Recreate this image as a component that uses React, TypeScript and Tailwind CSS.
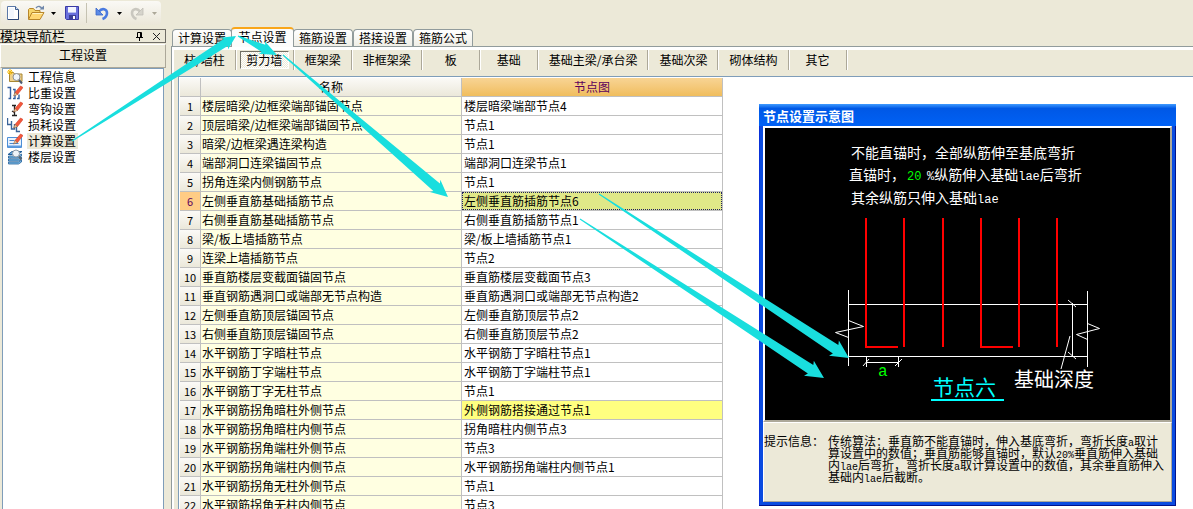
import React from "react";

const toolbarButton = "flex h-5 items-center justify-center";

function NewIcon() {
  return (
    <svg width="14" height="16" viewBox="0 0 14 16" aria-hidden="true">
      <path d="M1.5 1.5h8l3 3v10h-11z" fill="#fff" stroke="#5a78a8" />
      <path d="M3 3h5v10H3z" fill="#f2f6fd" />
      <path d="M9.5 1.5v3h3" fill="#cfdcf2" stroke="#3f5f8f" />
      <path d="M2 14.5h10.500V5" fill="none" stroke="#2c4777" />
    </svg>
  );
}

function OpenIcon() {
  return (
    <svg width="18" height="16" viewBox="0 0 18 16" aria-hidden="true">
      <path d="M1.5 14V4.5l1-1h4l1.5 2h5V8" fill="#f6d56b" stroke="#b8862a" />
      <path d="M1.500 14.500l3.500-7h12l-4 7z" fill="#ffd772" stroke="#b8862a" />
      <path d="M5.500 8.500h10" stroke="#fff3bf" />
      <path d="M9 3c2-2.500 5-2 6 1" fill="none" stroke="#6f87ab" strokeWidth="1.400" />
      <path d="M12.500 4.500h4.500V0.500z" fill="#6f87ab" />
    </svg>
  );
}

function SaveIcon() {
  return (
    <svg width="16" height="16" viewBox="0 0 16 16" aria-hidden="true">
      <path d="M1.500 1.500h13v13h-12l-1-1z" fill="#6a70dc" stroke="#3a3aa4" />
      <path d="M4 2h8v6H4z" fill="#f3f5ff" />
      <path d="M4 7h8v1H4z" fill="#b7c0f0" />
      <path d="M5 10h7v4H5z" fill="#3c3f96" />
      <path d="M9 11h2v3H9z" fill="#fff" />
    </svg>
  );
}

function UndoIcon({ off = false }: { off?: boolean }) {
  return (
    <svg width="14" height="15" viewBox="0 0 14 15" aria-hidden="true" className={off ? "-scale-x-100" : ""}>
      <path d="M4 5.500c3-4 8-2.500 8 1.500 0 3-2 5-4.500 6" fill="none" stroke={off ? "#c9c7bf" : "#4a7ae0"} strokeWidth="2.600" />
      <path d="M1 2v7h7z" fill={off ? "#d6d4cc" : "#5b8be6"} stroke={off ? "#c0beb6" : "#3a66c8"} strokeWidth=".8" />
    </svg>
  );
}

function Caret({ off = false }: { off?: boolean }) {
  return (
    <svg width="5" height="3" viewBox="0 0 5 3" aria-hidden="true">
      <path d="M0 0h5L2.500 3z" fill={off ? "#aca899" : "#000"} />
    </svg>
  );
}

const pencil = (
  <g>
    <path d="M8 7.500L13.500 1l2.500 1.500L10.500 9.500z" fill="#f4583c" stroke="#d03a26" strokeWidth=".6" />
    <path d="M8 7.500L6.500 11l4-1.500z" fill="#f3cf9c" stroke="#8a4b2a" strokeWidth=".5" />
  </g>
);

const navIcons: Record<string, React.ReactNode> = {
  info: (
    <>
      <path d="M2.500 12.500v-9h4l1 1.500h7.500v7.500z" fill="#efd08a" stroke="#a88734" />
      <path d="M0 3h6M3 0v6M1 1l4 4M5 1L1 5" stroke="#f2b90c" />
      <circle cx="9.500" cy="8" r="3.500" fill="#f0f5fb" stroke="#8a8f98" />
      <path d="M12 11l3 3.500" stroke="#4d5c74" strokeWidth="2" />
    </>
  ),
  weight: (
    <>
      <path d="M0.500 2.500h3v11h-2M6 4.500h2v9H6M10 13.500h2v-4" fill="none" stroke="#355f9f" strokeWidth="1.400" />
      {pencil}
    </>
  ),
  hook: (
    <>
      <path d="M5 4.500h4M7.500 5v9M5 14.500h5M5 10l2.500 1.500" fill="none" stroke="#222" strokeWidth="1.300" />
      {pencil}
    </>
  ),
  loss: (
    <>
      <path d="M.500 1v6.500h3.500M4.500 4v8h3V7M9.500 10v4.500h3.500" fill="none" stroke="#3a6398" strokeWidth="1.400" />
      {pencil}
    </>
  ),
  calc: (
    <>
      <path d="M.5 4.500h14v10H.5z" fill="#e9f2fd" stroke="#4d8fd6" />
      <path d="M1 12.500h13v2H1z" fill="#5c9be0" />
      <path d="M2.500 7.500h5M2.500 10.500h9" stroke="#4688cf" />
      {pencil}
    </>
  ),
  floor: (
    <>
      <path d="M1 5.500l4-3h10l-4 3zM1 9l3-2M1 12l3-2" fill="#6aa9dd" stroke="#245f98" />
      <path d="M1.500 7h10l3-2v2l-3 2h-10zM1.500 10h10l3-2v2l-3 2h-10zM1.500 13h10l3-2v2l-3 2h-10z" fill="#7dbce8" stroke="#245f98" strokeWidth=".8" />
      <circle cx="9" cy="4.500" r="3.500" fill="#eef3f8" stroke="#8c98a4" />
      <path d="M12 7.500l2.500 3" stroke="#5b6875" strokeWidth="2" />
    </>
  ),
};

const navItems = [
  { id: "info", label: "工程信息" },
  { id: "weight", label: "比重设置" },
  { id: "hook", label: "弯钩设置" },
  { id: "loss", label: "损耗设置" },
  { id: "calc", label: "计算设置" },
  { id: "floor", label: "楼层设置" },
];

const tabs = ["计算设置", "节点设置", "箍筋设置", "搭接设置", "箍筋公式"];

const kinds = ["柱/墙柱", "剪力墙", "框架梁", "非框架梁", "板", "基础", "基础主梁/承台梁", "基础次梁", "砌体结构", "其它"];

const rows: [string, string][] = [
  ["楼层暗梁/边框梁端部锚固节点", "楼层暗梁端部节点4"],
  ["顶层暗梁/边框梁端部锚固节点", "节点1"],
  ["暗梁/边框梁遇连梁构造", "节点1"],
  ["端部洞口连梁锚固节点", "端部洞口连梁节点1"],
  ["拐角连梁内侧钢筋节点", "节点1"],
  ["左侧垂直筋基础插筋节点", "左侧垂直筋插筋节点6"],
  ["右侧垂直筋基础插筋节点", "右侧垂直筋插筋节点1"],
  ["梁/板上墙插筋节点", "梁/板上墙插筋节点1"],
  ["连梁上墙插筋节点", "节点2"],
  ["垂直筋楼层变截面锚固节点", "垂直筋楼层变截面节点3"],
  ["垂直钢筋遇洞口或端部无节点构造", "垂直筋遇洞口或端部无节点构造2"],
  ["左侧垂直筋顶层锚固节点", "左侧垂直筋顶层节点2"],
  ["右侧垂直筋顶层锚固节点", "右侧垂直筋顶层节点2"],
  ["水平钢筋丁字暗柱节点", "水平钢筋丁字暗柱节点1"],
  ["水平钢筋丁字端柱节点", "水平钢筋丁字端柱节点1"],
  ["水平钢筋丁字无柱节点", "节点1"],
  ["水平钢筋拐角暗柱外侧节点", "外侧钢筋搭接通过节点1"],
  ["水平钢筋拐角暗柱内侧节点", "拐角暗柱内侧节点3"],
  ["水平钢筋拐角端柱外侧节点", "节点3"],
  ["水平钢筋拐角端柱内侧节点", "水平钢筋拐角端柱内侧节点1"],
  ["水平钢筋拐角无柱外侧节点", "节点1"],
  ["水平钢筋拐角无柱内侧节点", "节点3"],
];

function Toolbar() {
  return (
    <div className="flex h-7 shrink-0 items-start pt-px pl-px">
      <div className="flex h-6 w-40 items-center rounded bg-linear-to-b from-[#faf9f5] to-[#ebe7d9] pl-1">
        <button type="button" aria-label="新建" className={`${toolbarButton} w-4`}><NewIcon /></button>
        <button type="button" aria-label="打开" className={`${toolbarButton} ml-1.5 gap-1.5`}><OpenIcon /><Caret /></button>
        <button type="button" aria-label="保存" className={`${toolbarButton} ml-2 w-4`}><SaveIcon /></button>
        <span className="mr-2 ml-1.5 h-5 w-px bg-[#c5c2b2]" />
        <button type="button" aria-label="撤销" className={`${toolbarButton} gap-2`}><UndoIcon /><Caret /></button>
        <button type="button" aria-label="恢复" disabled className={`${toolbarButton} ml-2 gap-2`}><UndoIcon off /><Caret off /></button>
      </div>
    </div>
  );
}

function Navigator() {
  return (
    <aside className="mt-px flex w-[166px] shrink-0 flex-col">
      <div className="flex h-[14px] items-center border border-l-0 border-[#6f6d66] pr-1">
        <h2 className="flex-1 text-[13px] leading-3">模块导航栏</h2>
        <button type="button" aria-label="固定" className="mr-2">
          <svg width="9" height="10" viewBox="0 0 9 10"><path d="M2.500 6V1.500h4V6M5.500 1v5M1 6.500h7M4.500 7v3" fill="none" stroke="#000" /></svg>
        </button>
        <button type="button" aria-label="关闭">
          <svg width="9" height="9" viewBox="0 0 9 9"><path d="M1 1l7 7M8 1L1 8" stroke="#222" /></svg>
        </button>
      </div>
      <button type="button" className="mt-px h-6 border border-[#aca899] border-t-white border-l-white pb-0.5 leading-3">工程设置</button>
      <nav className="mr-0.5 ml-0.5 flex-1 border border-b-0 border-[#7f9db9] bg-white">
        <ul>
          {navItems.map((item) => (
            <li key={item.id}>
              <button type="button" className="flex h-4 items-center gap-1 pl-1">
                <svg width="16" height="16" viewBox="0 0 16 16" aria-hidden="true">{navIcons[item.id]}</svg>
                <span className={item.id === "calc" ? "bg-[#ece9d8] pr-0.5 pl-px leading-4" : "pr-0.5 pl-px leading-4"}>{item.label}</span>
              </button>
            </li>
          ))}
        </ul>
      </nav>
    </aside>
  );
}

function Tabs() {
  return (
    <div role="tablist" className="flex h-[18px] items-end pl-px">
      {tabs.map((tab) =>
        tab === "节点设置" ? (
          <button key={tab} type="button" role="tab" aria-selected className="relative z-10 -mx-px -mb-px h-5 w-[63px] rounded-t-sm border border-t-2 border-b-0 border-[#919b9c] border-t-[#f9a61a] bg-[#fcfcfb] pb-0.5 leading-4">
            {tab}
          </button>
        ) : (
          <button key={tab} type="button" role="tab" aria-selected={false} className="h-[17px] w-[60px] rounded-t-sm border border-b-0 border-[#919b9c] bg-linear-to-b from-white to-[#efeee6] leading-4">
            {tab}
          </button>
        )
      )}
    </div>
  );
}

function Kinds() {
  return (
    <div className="-ml-px flex h-5 shrink-0 pr-px">
      {kinds.map((kind) => (
        <div key={kind} className="flex min-w-[58px] justify-center border-r border-[#aca899] shadow-[1px_0_0_#fff]">
          {kind === "剪力墙" ? (
            <button type="button" aria-pressed className="mx-1 my-px flex-1 border border-[#716f64] border-r-white border-b-white bg-[conic-gradient(#fff_25%,#ece9d8_0_50%,#fff_0_75%,#ece9d8_0)] bg-size-[2px_2px] px-1 leading-4">
              {kind}
            </button>
          ) : (
            <button type="button" className="pr-2.5 pl-[11px] leading-5">{kind}</button>
          )}
        </div>
      ))}
    </div>
  );
}

function rowHeadStyle(selected: boolean) {
  return selected ? "bg-[#ffcc85] text-[#5c005c]" : "bg-linear-to-b from-[#fbfaf7] to-[#ebe8da]";
}

function NodeTable() {
  return (
    <table className="w-[543px] table-fixed border-separate border-spacing-0 text-left">
      <colgroup>
        <col className="w-[21px]" />
        <col className="w-[261px]" />
        <col className="w-[261px]" />
      </colgroup>
      <thead>
        <tr className="h-[19px] leading-4">
          <th className="border-r border-b border-[#c0c0c0] bg-linear-to-b from-[#fbfaf7] to-[#ebe8da] p-0" />
          <th scope="col" className="border-r border-b border-[#c0c0c0] bg-linear-to-b from-[#fbfaf7] to-[#ebe8da] p-0 text-center font-normal">名称</th>
          <th scope="col" className="border-r border-b border-[#c0c0c0] bg-linear-to-b from-[#f8d494] to-[#f0bd5c] p-0 text-center font-normal text-[#5c005c]">节点图</th>
        </tr>
      </thead>
      <tbody>
        {rows.map(([name, node], i) => (
          <tr key={i} className="h-[19px] leading-4">
            <th scope="row" className={`border-r border-b border-[#c0c0c0] p-0 text-center text-[11px] font-normal ${rowHeadStyle(i === 5)}`}>{i + 1}</th>
            <td className="border-r border-b border-[#c0c0c0] bg-[#ffffe1] py-0 pr-0 pl-px whitespace-nowrap">{name}</td>
            <td className={`border-r border-b border-[#c0c0c0] p-0 whitespace-nowrap ${i === 16 ? "bg-[#ffff80]" : i === 5 ? "bg-[#e0e888]" : "bg-white"}`}>
              <div className={i === 5 ? "border border-dotted border-[#202060] pl-px leading-4" : "pl-0.5"}>{node}</div>
            </td>
          </tr>
        ))}
      </tbody>
    </table>
  );
}

function Drawing() {
  return (
    <svg viewBox="0 0 405 292" className="block w-full bg-black font-['Noto_Sans_CJK_SC',sans-serif]" role="img" aria-label="节点六">
      <g fill="#fff" fontSize="14">
        <text x="86" y="30">不能直锚时，全部纵筋伸至基底弯折</text>
        <text x="84" y="52">直锚时，</text>
        <text x="142" y="52" fontSize="12" fill="#00ff00" fontFamily="Liberation Mono">20</text>
        <text x="162" y="52"><tspan fontSize="12" fontFamily="Liberation Mono">%</tspan>纵筋伸入基础<tspan fontSize="12" fontFamily="Liberation Mono">lae</tspan>后弯折</text>
        <text x="86" y="75">其余纵筋只伸入基础<tspan fontSize="12" fontFamily="Liberation Mono">lae</tspan></text>
      </g>
      <g fill="none" stroke="#fff" shapeRendering="crispEdges">
        <path d="M83.500 162v76M322.500 163v76M83 176.500h240M83 228.500h240" />
        <path d="M307.500 175v54M101.500 229v10M133.500 229v10M101 234.500h32" />
      </g>
      <g fill="none" stroke="#fff">
        <path d="M83.500 192.500l15 6-28 6 13 5M322.500 195.500l12 5-23 6 11 5M303 172l8 7M303 224l8 7M98 238l6-7M130 238l7-7M305 208l-9 33" />
      </g>
      <g fill="none" stroke="#f00" strokeWidth="2" shapeRendering="crispEdges">
        <path d="M101 90v129h32M139 90v129M178 90v129M216 90v129h32M254 90v129M292 90v129" />
      </g>
      <text x="113" y="248" fill="#00ff00" fontSize="16" fontFamily="Liberation Mono">a</text>
      <text x="168" y="267" fill="#00ffff" fontSize="21">节点六</text>
      <path d="M166 272h73" stroke="#00ffff" strokeWidth="2" />
      <text x="249" y="259" fill="#fff" fontSize="20">基础深度</text>
    </svg>
  );
}

function Mono({ children }: { children: string }) {
  return <span className="font-['Liberation_Mono',monospace] text-[10px] leading-1">{children}</span>;
}

function PreviewWindow() {
  return (
    <section aria-label="节点设置示意图" className="absolute top-[104px] left-[759px] w-[417px] bg-[#0a4be0] shadow-[inset_-1px_-1px_0_#00138c,inset_1px_0_0_#0831d9]">
      <h2 className="h-[22px] bg-linear-to-b from-[#3f9bff] via-[#0058e6] via-20% to-[#0061f5] px-1 text-[13px] leading-6 font-bold text-white">节点设置示意图</h2>
      <div className="px-1 pb-1">
        <div className="border-2 border-white border-r-[#aca899] border-b-[#aca899]">
          <Drawing />
        </div>
        <div className="flex h-20 gap-1 border border-[#aca899] border-t-white border-l-white bg-[#ece9d8] pt-3 leading-3 whitespace-nowrap">
          <span>提示信息：</span>
          <p>
            传统算法：垂直筋不能直锚时，伸入基底弯折，弯折长度<Mono>a</Mono>取计<br />
            算设置中的数值；垂直筋能够直锚时，默认<Mono>20%</Mono>垂直筋伸入基础<br />
            内<Mono>lae</Mono>后弯折，弯折长度<Mono>a</Mono>取计算设置中的数值，其余垂直筋伸入<br />
            基础内<Mono>lae</Mono>后截断。
          </p>
        </div>
      </div>
    </section>
  );
}

type Point = [number, number];

const arrows: { tail: Point; tip: Point; head: number; half: number; shaft: number }[] = [
  { tail: [72, 141], tip: [236, 36], head: 14, half: 7, shaft: 4 },
  { tail: [238, 36], tip: [277, 55], head: 17, half: 7, shaft: 4 },
  { tail: [283, 55], tip: [448, 197], head: 17, half: 8, shaft: 5 },
  { tail: [599, 194], tip: [849, 358], head: 18, half: 9, shaft: 5 },
  { tail: [580, 219], tip: [824, 378], head: 18, half: 9, shaft: 5 },
];

function arrowPoints({ tail, tip, head, half, shaft }: (typeof arrows)[number]) {
  const length = Math.hypot(tip[0] - tail[0], tip[1] - tail[1]);
  const ux = (tip[0] - tail[0]) / length;
  const uy = (tip[1] - tail[1]) / length;
  const at = (back: number, side: number) => `${tip[0] - ux * back - uy * side},${tip[1] - uy * back + ux * side}`;
  return [
    at(length, 0.5), at(head - 2, shaft), at(head, half), at(0, 0),
    at(head, -half), at(head - 2, -shaft), at(length, -0.5),
  ].join(" ");
}

function Arrows() {
  return (
    <svg width="900" height="509" className="pointer-events-none absolute top-0 left-0 z-20" aria-hidden="true">
      {arrows.map((arrow, i) => (
        <polygon key={i} points={arrowPoints(arrow)} fill="#19dede" />
      ))}
    </svg>
  );
}

export default function App() {
  return (
    <div className="relative flex h-screen flex-col overflow-hidden bg-[#ece9d8] font-['Noto_Sans_CJK_SC',sans-serif] text-xs text-black">
      <Toolbar />
      <div className="flex min-h-0 flex-1 gap-[5px]">
        <Navigator />
        <main className="flex min-w-0 flex-1 flex-col">
          <Tabs />
          <div className="flex min-h-0 flex-1 flex-col border-t border-l border-[#919b9c]">
            <div className="flex min-h-0 flex-1 flex-col border-t-3 border-l-2 border-white">
              <Kinds />
              <div className="mt-1.5 ml-1 min-h-0 flex-1 overflow-hidden border-t border-l border-[#7f9db9] bg-white pt-px pl-px">
                <NodeTable />
              </div>
            </div>
          </div>
        </main>
      </div>
      <PreviewWindow />
      <Arrows />
    </div>
  );
}
